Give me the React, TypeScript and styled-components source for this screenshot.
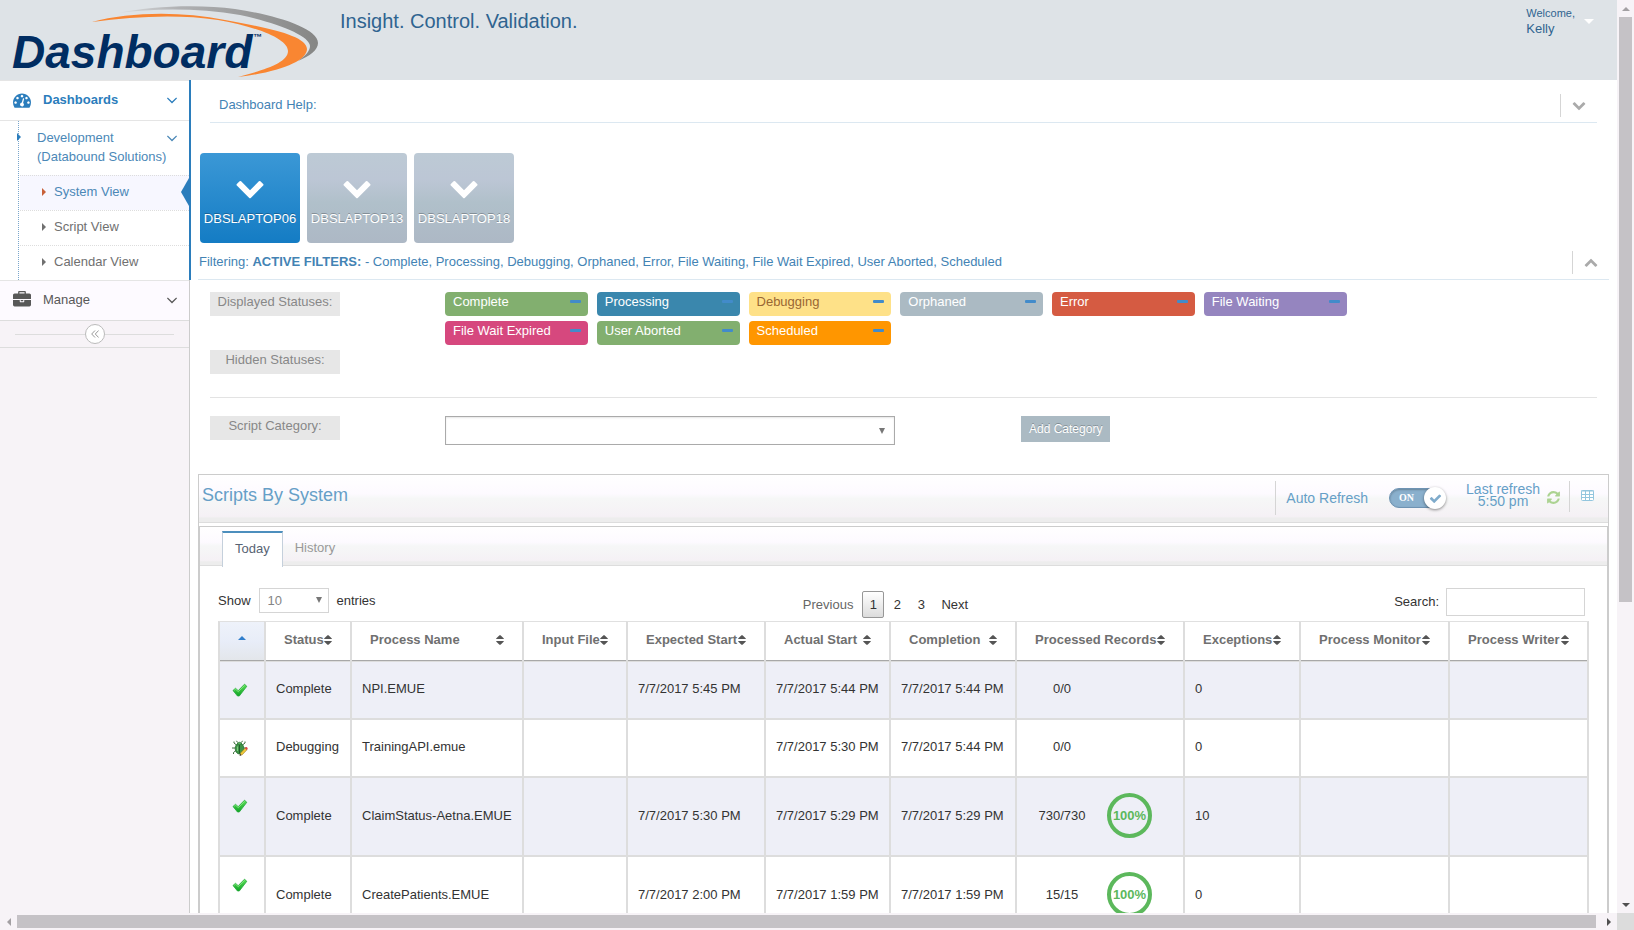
import React from "react";
import styled, { createGlobalStyle, css } from "styled-components";

const GlobalStyle = createGlobalStyle`
  *, *::before, *::after { box-sizing: border-box; }
  body {
    margin: 0;
    background: #fff;
    color: #333;
    font: 13px/20px "Liberation Sans", Arial, sans-serif;
  }
  button, input, select { font: inherit; color: inherit; margin: 0; border-radius: 0; }
  button { background: none; border: 0; padding: 0; cursor: pointer; }
  a { color: inherit; text-decoration: none; }
`;

/* ---------- icons ---------- */

const glyphs = {
  dashboard:
    "M384 1152q0-53-37.5-90.5t-90.5-37.5-90.5 37.5-37.5 90.5 37.5 90.5 90.5 37.5 90.5-37.5 37.5-90.5zm192-448q0-53-37.5-90.5t-90.5-37.5-90.5 37.5-37.5 90.5 37.5 90.5 90.5 37.5 90.5-37.5 37.5-90.5zm428 481l101-382q6-26-7.5-48.5t-38.5-29.5-48 6.5-30 39.5l-101 382q-60 5-107 43.5t-63 98.5q-20 77 20 146t117 89 146-20 89-117q16-60-6-117t-72-91zm660-33q0-53-37.5-90.5t-90.5-37.5-90.5 37.5-37.5 90.5 37.5 90.5 90.5 37.5 90.5-37.5 37.5-90.5zm-640-640q0-53-37.5-90.5t-90.5-37.5-90.5 37.5-37.5 90.5 37.5 90.5 90.5 37.5 90.5-37.5 37.5-90.5zm448 192q0-53-37.5-90.5t-90.5-37.5-90.5 37.5-37.5 90.5 37.5 90.5 90.5 37.5 90.5-37.5 37.5-90.5zm320 448q0 261-141 483-19 29-54 29h-1402q-35 0-54-29-141-221-141-483 0-182 71-348t191-286 286-191 348-71 348 71 286 191 191 286 71 348z",
  briefcase:
    "M640 256h512v-128h-512v128zm1152 640v480q0 66-47 113t-113 47h-1472q-66 0-113-47t-47-113v-480h672v160q0 26 19 45t45 19h320q26 0 45-19t19-45v-160h672zm-768 0v128h-256v-128h256zm768-480v384h-1792v-384q0-66 47-113t113-47h352v-160q0-40 28-68t68-28h576q40 0 68 28t28 68v160h352q66 0 113 47t47 113z",
  chevronDown:
    "M1683 808l-742 741q-19 19-45 19t-45-19l-742-741q-19-19-19-45.5t19-45.5l166-165q19-19 45-19t45 19l531 531 531-531q19-19 45-19t45 19l166 165q19 19 19 45.5t-19 45.5z",
  chevronUp:
    "M1683 1331l-166 165q-19 19-45 19t-45-19l-531-531-531 531q-19 19-45 19t-45-19l-166-165q-19-19-19-45.5t19-45.5l742-741q19-19 45-19t45 19l742 741q19 19 19 45.5t-19 45.5z",
  angleDown:
    "M1395 736q0 13-10 23l-466 466q-10 10-23 10t-23-10l-466-466q-10-10-10-23t10-23l50-50q10-10 23-10t23 10l393 393 393-393q10-10 23-10t23 10l50 50q10 10 10 23z",
  refresh:
    "M1639 1056q0 5-1 7-64 268-268 434.5t-478 166.5q-146 0-282.5-55t-243.5-157l-129 129q-19 19-45 19t-45-19-19-45v-448q0-26 19-45t45-19h448q26 0 45 19t19 45-19 45l-137 137q71 66 161 102t187 36q134 0 250-65t186-179q11-17 53-117 8-23 30-23h192q13 0 22.5 9.5t9.5 22.5zm25-800v448q0 26-19 45t-45 19h-448q-26 0-45-19t-19-45 19-45l138-138q-148-137-349-137-134 0-250 65t-186 179q-11 17-53 117-8 23-30 23h-199q-13 0-22.5-9.5t-9.5-22.5v-7q65-268 270-434.5t480-166.5q146 0 284 55.5t245 156.5l130-129q19-19 45-19t45 19 19 45z",
  check:
    "M1671 566q0 40-28 68l-724 724-136 136q-28 28-68 28t-68-28l-136-136-362-362q-28-28-28-68t28-68l136-136q28-28 68-28t68 28l294 295 656-657q28-28 68-28t68 28l136 136q28 28 28 68z",
};

const Glyph = ({ name, size, color = "currentColor" }: { name: keyof typeof glyphs; size: number; color?: string }) => (
  <svg width={size} height={size} viewBox="0 0 1792 1792" fill={color} aria-hidden="true">
    <path d={glyphs[name]} />
  </svg>
);

const Arrow = ({ dir, color, long = 8, short = 4 }: { dir: "up" | "down" | "left" | "right"; color: string; long?: number; short?: number }) => {
  const vertical = dir === "up" || dir === "down";
  const w = vertical ? long : short;
  const h = vertical ? short : long;
  const points = {
    up: `0,${h} ${w},${h} ${w / 2},0`,
    down: `0,0 ${w},0 ${w / 2},${h}`,
    left: `${w},0 ${w},${h} 0,${h / 2}`,
    right: `0,0 0,${h} ${w},${h / 2}`,
  }[dir];
  return (
    <svg width={w} height={h} viewBox={`0 0 ${w} ${h}`} fill={color} aria-hidden="true">
      <polygon points={points} />
    </svg>
  );
};

const SortIcon = () => (
  <svg width="8" height="10" viewBox="0 0 8 10" fill="#555" aria-hidden="true">
    <path d="M.5 4Q-.2 4 .4 3.300L3.500.3Q4 0 4.500.3L7.600 3.300Q8.200 4 7.500 4ZM.5 6Q-.2 6 .4 6.700L3.500 9.700Q4 10 4.500 9.700L7.600 6.700Q8.200 6 7.500 6Z" />
  </svg>
);

const TableIcon = () => (
  <svg width="13" height="11" viewBox="0 0 13 11" aria-hidden="true">
    <rect x=".5" y=".5" width="12" height="10" rx="1" fill="#fff" stroke="#93c6de" />
    <path d="M0 1h13M0 4.500h13M0 7.500h13M4.500 0v11M8.500 0v11" stroke="#93c6de" fill="none" />
  </svg>
);

const CompleteIcon = () => (
  <svg width="16" height="16" viewBox="0 0 16 16" role="img" aria-label="Complete">
    <defs>
      <linearGradient id="tick" x1="0" y1="0" x2="0" y2="1">
        <stop offset="0" stopColor="#5fe05a" />
        <stop offset="1" stopColor="#0fa325" />
      </linearGradient>
    </defs>
    <path d="M1 8.500L3.500 6.300L6.200 8.700L12.500 2.200L14.800 4.300L7.300 14L5.500 14Z" fill="url(#tick)" stroke="#1fa836" strokeWidth=".8" strokeLinejoin="round" />
    <path d="M2.200 8.300L3.600 7.200L6.300 9.700L12.600 3.300" stroke="#8df088" strokeWidth=".8" fill="none" />
  </svg>
);

const DebugIcon = () => (
  <svg width="16" height="16" viewBox="0 0 16 16" role="img" aria-label="Debugging">
    <path d="M4.500 5L2 3V1.500M3.500 8H0M4 10.500L1.500 12.500V14M10.500 5L13 3V1.500M11.500 8H14M5.500 2.500L4.500.8M9.500 2.500L10.500.8" stroke="#3c6e3c" fill="none" />
    <ellipse cx="7.500" cy="8.500" rx="4.300" ry="5.500" fill="#3f9447" stroke="#246b2e" strokeWidth=".8" />
    <path d="M5 3.800Q7.500 .6 10 3.800Q7.500 5.400 5 3.800Z" fill="#59b35f" stroke="#246b2e" strokeWidth=".6" />
    <path d="M7.500 5V13.500" stroke="#1f5c28" />
    <path d="M5.500 6.500V11" stroke="#7ccb7e" />
    <path d="M8 15.300L8.500 13L13.300 7.900L15.200 9.600L10.300 14.700Z" fill="#efc93a" stroke="#8f6b1d" strokeWidth=".5" />
    <path d="M12.800 8.300L14 7.100Q15 6.900 15.800 8.500L14.700 10Z" fill="#de4444" />
    <path d="M7.500 15.700L8.300 14L9.400 15.200Z" fill="#222" />
  </svg>
);

const Logo = () => (
  <svg width="322" height="80" viewBox="0 0 322 80" role="img" aria-label="Dashboard">
    <defs>
      <linearGradient id="swoosh" x1="118" y1="0" x2="318" y2="0" gradientUnits="userSpaceOnUse">
        <stop offset="0" stopColor="#dcdee0" />
        <stop offset=".3" stopColor="#b0b1b3" />
        <stop offset="1" stopColor="#858685" />
      </linearGradient>
    </defs>
    <path d="M118 13C150 6 200 4 235 9C275 15 318 28 318 43C318 50 310 56 298 61C306 55 310 51 310 46C310 36 278 23 240 15C200 8 155 8 118 13Z" fill="url(#swoosh)" />
    <path d="M92 22C130 12 180 11 225 20C270 28 307 36 307 49C307 61 280 72 238 77C264 70 288 63 288 51C288 40 262 28 218 20C180 14 135 16 92 22Z" fill="#f98632" />
    <text x="12" y="68" fontFamily="'Liberation Sans', Arial, sans-serif" fontSize="46" fontWeight="bold" fontStyle="italic" fill="#002d62">
      Dashboard
    </text>
    <text x="253" y="40" fontFamily="'Liberation Sans', Arial, sans-serif" fontSize="9" fontWeight="bold" fill="#002d62">
      ™
    </text>
  </svg>
);

/* ---------- window frame ---------- */

const Window = styled.div`
  display: grid;
  grid-template: minmax(0, 1fr) 17px / minmax(0, 1fr) 17px;
  height: 100vh;
`;

const Page = styled.div`
  display: flex;
  flex-direction: column;
  overflow: hidden;
`;

const ScrollTrack = styled.div<{ $vertical?: boolean }>`
  display: flex;
  flex-direction: ${(p) => (p.$vertical ? "column" : "row")};
  padding: ${(p) => (p.$vertical ? "0 2px" : "2px 0")};
  background: #f7f3f7;
`;

const ScrollEnd = styled.span`
  display: flex;
  flex: 0 0 17px;
  align-items: center;
  justify-content: center;
`;

const ScrollThumb = styled.span<{ $grow: number }>`
  flex: ${(p) => p.$grow} 0 0;
  background: #c5c2c6;
`;

const ScrollRest = styled.span<{ $grow: number }>`
  flex: ${(p) => p.$grow} 0 0;
`;

const ScrollCorner = styled.div`
  background: #dcdcdc;
`;

/* ---------- header ---------- */

const Header = styled.header`
  display: flex;
  flex: none;
  height: 80px;
  background: #dee3e7;
  color: #2f6490;
`;

const Tagline = styled.h1`
  margin: 0 0 0 18px;
  padding-top: 9px;
  font-size: 20px;
  line-height: 24px;
  font-weight: normal;
`;

const UserMenu = styled.button`
  display: flex;
  gap: 9px;
  margin: 6px 23px 0 auto;
  align-self: flex-start;
  text-align: left;
  line-height: 15px;
  small { display: block; font-size: 11px; }
  svg { margin-top: 13px; }
`;

/* ---------- sidebar ---------- */

const Body = styled.div`
  display: flex;
  flex: 1;
  min-height: 0;
`;

const Sidebar = styled.nav`
  flex: 0 0 190px;
  border-right: 1px solid #ccc;
  background: #f7f3f7;
`;

const OpenGroup = styled.div`
  position: relative;
  background: #fff;
  color: #4b88b7;
  &::after {
    content: "";
    position: absolute;
    top: 0;
    bottom: 0;
    right: -2px;
    width: 2px;
    background: #2b7dbc;
  }
`;

const NavItem = styled.a<{ $open?: boolean }>`
  display: flex;
  align-items: center;
  height: 40px;
  padding: 0 8px 2px 13px;
  border-top: 1px solid #e5e5e5;
  background: ${(p) => (p.$open ? "#fff" : "#fdfaff")};
  color: ${(p) => (p.$open ? "#2b7dbc" : "#585858")};
  font-weight: ${(p) => (p.$open ? "bold" : "normal")};
  span { flex: 1; padding-left: 12px; }
`;

const Submenu = styled.div`
  position: relative;
  border-top: 1px solid #e5e5e5;
  &::before {
    content: "";
    position: absolute;
    top: 0;
    bottom: 0;
    left: 18px;
    border-left: 1px dotted #7aa6cc;
  }
`;

const SubHeading = styled.a`
  position: relative;
  display: flex;
  align-items: flex-start;
  padding: 7px 8px 9px 17px;
  line-height: 19px;
  > svg:first-child { margin-top: 5px; }
  span { flex: 1; padding-left: 16px; white-space: nowrap; }
  b { font-weight: normal; display: block; }
`;

const SubAngle = styled.i`
  position: absolute;
  top: 8px;
  right: 8px;
  display: flex;
`;

const SubItem = styled.a<{ $active?: boolean }>`
  position: relative;
  display: flex;
  align-items: center;
  gap: 8px;
  height: 35px;
  margin-left: 20px;
  padding: 0 0 2px 22px;
  border-top: 1px dotted #ddd;
  background: ${(p) => (p.$active ? "#f7f7ff" : "#fff")};
  color: ${(p) => (p.$active ? "#4b88b7" : "#707070")};
  ${(p) =>
    p.$active &&
    css`
      &::after {
        content: "";
        position: absolute;
        right: 0;
        top: 2px;
        border: 14px solid transparent;
        border-left-width: 0;
        border-right: 8px solid #2b7dbc;
      }
    `}
`;

const Collapse = styled.div`
  display: flex;
  align-items: center;
  height: 28px;
  padding: 0 15px;
  border-top: 1px solid #ddd;
  border-bottom: 1px solid #ddd;
  &::before, &::after { content: ""; flex: 1; border-top: 1px solid #ddd; }
`;

const CollapseButton = styled.button`
  display: flex;
  align-items: center;
  justify-content: center;
  width: 20px;
  height: 20px;
  border: 1px solid #bbb;
  border-radius: 50%;
  background: #fff;
`;

/* ---------- main area ---------- */

const Main = styled.main`
  flex: 1;
  min-width: 0;
  padding: 0 8px;
`;

const FoldBar = styled.div<{ $inset?: boolean }>`
  display: flex;
  align-items: center;
  height: ${(p) => (p.$inset ? 43 : 37)}px;
  margin: ${(p) => (p.$inset ? "0 12px" : "0")};
  padding: ${(p) => (p.$inset ? "8px 0 0 9px" : "2px 0 0 1px")};
  border-bottom: 1px solid #dce8f1;
  color: #4383b4;
`;

const FoldButton = styled.button`
  display: flex;
  align-items: center;
  justify-content: center;
  width: 37px;
  height: 23px;
  margin-left: auto;
  border-left: 1px solid #d5d5d5;
`;

const Tiles = styled.div`
  display: flex;
  gap: 7px;
  margin-top: 30px;
  padding-left: 2px;
`;

const Tile = styled.button<{ $active?: boolean }>`
  display: flex;
  flex-direction: column;
  align-items: center;
  width: 100px;
  height: 90px;
  padding-top: 19px;
  gap: 7px;
  border-radius: 4px;
  background: ${(p) =>
    p.$active ? "linear-gradient(#3b98d6, #147cc4)" : "linear-gradient(#bdcad5, #bcc6d5 30%, #b0c0ca 55%, #adb8c5)"};
  color: #fff;
  text-shadow: 0 -1px 0 rgba(0, 0, 0, 0.25);
`;

const Filters = styled.section`
  padding: 12px 12px 0;
`;

const FilterRow = styled.div`
  display: grid;
  grid-template-columns: 235px minmax(0, 65%);
  align-items: start;
  margin-bottom: 5px;
`;

const FilterLabel = styled.span`
  width: 130px;
  height: 24px;
  background: #e7e7e7;
  color: #888;
  text-align: center;
`;

const Statuses = styled.div`
  display: grid;
  grid-template-columns: repeat(6, 1fr);
  gap: 5px 9px;
`;

const Status = styled.div<{ $bg: string; $fg?: string }>`
  display: flex;
  justify-content: space-between;
  height: 24px;
  padding: 0 7px 0 8px;
  border-radius: 4px;
  background: ${(p) => p.$bg};
  color: ${(p) => p.$fg ?? "#fff"};
`;

const HideStatus = styled.button`
  width: 11px;
  height: 3px;
  margin-top: 8px;
  border-radius: 1px;
  background: #428bca;
`;

const Rule = styled.hr`
  margin: 23px 0 18px;
  border: 0;
  border-top: 1px solid #e3e3e3;
`;

const CategoryRow = styled.div`
  display: grid;
  grid-template-columns: 235px 450px auto;
  align-items: start;
  justify-content: start;
`;

const SelectBox = styled.span<{ $width?: number; $dark?: boolean }>`
  position: relative;
  display: flex;
  width: ${(p) => (p.$width ? `${p.$width}px` : "100%")};
  select {
    width: 100%;
    height: ${(p) => (p.$dark ? 29 : 25)}px;
    padding: 0 8px;
    border: 1px solid ${(p) => (p.$dark ? "#aaa" : "#d5d5d5")};
    background: #fff;
    color: #858585;
    appearance: none;
    box-shadow: ${(p) => (p.$dark ? "inset 0 1px 2px rgba(0, 0, 0, 0.1)" : "none")};
  }
  svg {
    position: absolute;
    right: ${(p) => (p.$dark ? 10 : 7)}px;
    top: ${(p) => (p.$dark ? 12 : 9)}px;
    pointer-events: none;
  }
`;

const AddButton = styled.button`
  height: 26px;
  margin-left: 126px;
  padding: 0 8px;
  background: #abbac3;
  color: #fff;
  font-size: 12px;
  text-shadow: 0 -1px 0 rgba(0, 0, 0, 0.25);
`;

const barGradient = "linear-gradient(#fff, #fdfaff 40%, #f6f7f7 50%, #f5f1f5 88%, #ededed 92%)";

const Panel = styled.section`
  margin-top: 29px;
  border: 1px solid #ccc;
`;

const PanelHeader = styled.div`
  display: flex;
  height: 48px;
  margin-bottom: 3px;
  padding-left: 3px;
  border-bottom: 1px solid #ddd;
  background: ${barGradient};
  color: #669fc7;
  font-size: 14px;
`;

const PanelTitle = styled.h2`
  flex: 1;
  margin: 0;
  font-size: 18px;
  line-height: 41px;
  font-weight: normal;
`;

const RefreshSwitch = styled.label`
  display: flex;
  align-items: center;
  gap: 21px;
  height: 34px;
  margin-top: 6px;
  padding-left: 10px;
  border-left: 1px solid #d5d5d5;
`;

const Switch = styled.span`
  position: relative;
  display: block;
  width: 57px;
  height: 20px;
  input {
    appearance: none;
    display: block;
    width: 52px;
    height: 20px;
    border: 1px solid #6e93b3;
    border-radius: 10px;
    background: #8ab0cd;
    box-shadow: inset 0 1px 2px rgba(0, 0, 0, 0.25);
  }
`;

const SwitchText = styled.span`
  position: absolute;
  left: 10px;
  top: 0;
  color: #fff;
  font: bold 10px/19px "Liberation Serif", "Times New Roman", serif;
`;

const Knob = styled.span`
  position: absolute;
  top: -1px;
  right: 0;
  display: flex;
  align-items: center;
  justify-content: center;
  width: 22px;
  height: 22px;
  border-radius: 50%;
  background: #fff;
  box-shadow: 0 1px 3px rgba(0, 0, 0, 0.45);
`;

const LastRefresh = styled.p`
  margin: 8px 0 0 20px;
  line-height: 12px;
  text-align: center;
`;

const PanelTool = styled.button<{ $divided?: boolean }>`
  display: flex;
  align-items: center;
  justify-content: center;
  height: 31px;
  margin: ${(p) => (p.$divided ? "6px 0 0 8px" : "7px 0 0 6px")};
  padding: ${(p) => (p.$divided ? "0 14px 3px 11px" : "0")};
  border-left: ${(p) => (p.$divided ? "1px solid #d5d5d5" : "0")};
`;

const PanelBody = styled.div`
  border: 1px solid #ccc;
  border-bottom: 0;
`;

const Tabs = styled.div`
  display: flex;
  height: 39px;
  padding: 4px 22px 0;
  border-bottom: 1px solid #ddd;
  background: ${barGradient};
`;

const Tab = styled.button<{ $active?: boolean }>`
  height: 36px;
  padding: 0 12px 2px;
  ${(p) =>
    p.$active
      ? css`
          border: 1px solid #c5d0dc;
          border-top: 2px solid #4c8fbd;
          border-bottom: 0;
          background: #fff;
          color: #576373;
        `
      : css`
          color: #999;
        `}
`;

const TableArea = styled.div`
  padding: 0 18px;
`;

const Controls = styled.div`
  display: grid;
  grid-template-columns: 42% auto 1fr;
  align-items: start;
  height: 55px;
  padding-top: 22px;
`;

const Length = styled.label`
  display: flex;
  align-items: center;
  gap: 8px;
`;

const Pager = styled.div`
  display: flex;
  gap: 2px;
  padding: 3px 0 0 2px;
`;

const PageButton = styled.button<{ $current?: boolean; $muted?: boolean }>`
  min-width: 22px;
  height: 27px;
  padding: 0 7px;
  ${(p) => p.$muted && "color: #666;"}
  ${(p) =>
    p.$current &&
    css`
      padding: 0;
      border: 1px solid #979797;
      border-radius: 2px;
      background: linear-gradient(#fff, #dcdcdc);
    `}
`;

const Search = styled.label`
  display: flex;
  align-items: center;
  justify-content: flex-end;
  gap: 7px;
  padding-right: 4px;
  input {
    width: 139px;
    height: 28px;
    padding: 0 6px;
    border: 1px solid #d5d5d5;
    background: #fff;
  }
`;

const DataTable = styled.table`
  width: 100%;
  table-layout: fixed;
  border-spacing: 0;
  white-space: nowrap;
  th, td {
    padding: 0 10px 2px;
    border-left: 2px solid #ddd;
    text-align: left;
  }
  th:last-child, td:last-child { border-right: 2px solid #ddd; }
  th {
    height: 41px;
    padding: 0 18px 3px;
    border-top: 1px solid #e0e0e0;
    border-bottom: 1px solid #ddd;
    box-shadow: inset 0 -1px #a8a8a8;
    color: #707070;
  }
  td { border-bottom: 2px solid #ddd; }
  tbody tr:nth-child(odd) { background: #eeeff7; }
`;

const SortedHead = styled.th`
  background: linear-gradient(#eef2fa, #e8edf8 50%, #e3e6ea);
  text-align: center;
`;

const SortButton = styled.button`
  display: flex;
  align-items: center;
  justify-content: space-between;
  width: 100%;
  font-weight: bold;
`;

const SortedButton = styled.button`
  display: flex;
  margin: -5px 0 0 -2px;
  padding: 2px;
`;

const Row = styled.tr<{ $tall?: boolean }>`
  height: ${(p) => (p.$tall ? 79 : 58)}px;
`;

const IconCell = styled.td`
  && { padding: 20px 12px 0; vertical-align: top; }
  svg { display: block; }
`;

const Records = styled.div`
  display: flex;
  align-items: center;
  margin: 0 -10px;
  > span { width: 90px; text-align: center; }
`;

const Ring = styled.b`
  width: 45px;
  height: 45px;
  border: 4px solid #5cb85c;
  border-radius: 50%;
  display: flex;
  align-items: center;
  justify-content: center;
  color: #5cb85c;
`;

/* ---------- data ---------- */

const statuses = [
  { label: "Complete", bg: "#82af6f" },
  { label: "Processing", bg: "#3a87ad" },
  { label: "Debugging", bg: "#fee188", fg: "#996633" },
  { label: "Orphaned", bg: "#abbac3" },
  { label: "Error", bg: "#d55b42" },
  { label: "File Waiting", bg: "#9585bf" },
  { label: "File Wait Expired", bg: "#d6487e" },
  { label: "User Aborted", bg: "#82af6f" },
  { label: "Scheduled", bg: "#ff9600" },
];

const columns = [
  { title: "Status", width: 86 },
  { title: "Process Name", width: 172 },
  { title: "Input File", width: 104 },
  { title: "Expected Start", width: 138 },
  { title: "Actual Start", width: 125 },
  { title: "Completion", width: 126 },
  { title: "Processed Records", width: 168 },
  { title: "Exceptions", width: 116 },
  { title: "Process Monitor", width: 149 },
  { title: "Process Writer", width: 141 },
];

const rows = [
  { status: "Complete", name: "NPI.EMUE", expected: "7/7/2017 5:45 PM", actual: "7/7/2017 5:44 PM", done: "7/7/2017 5:44 PM", records: "0/0", exceptions: "0" },
  { status: "Debugging", name: "TrainingAPI.emue", expected: "", actual: "7/7/2017 5:30 PM", done: "7/7/2017 5:44 PM", records: "0/0", exceptions: "0" },
  { status: "Complete", name: "ClaimStatus-Aetna.EMUE", expected: "7/7/2017 5:30 PM", actual: "7/7/2017 5:29 PM", done: "7/7/2017 5:29 PM", records: "730/730", percent: "100%", exceptions: "10" },
  { status: "Complete", name: "CreatePatients.EMUE", expected: "7/7/2017 2:00 PM", actual: "7/7/2017 1:59 PM", done: "7/7/2017 1:59 PM", records: "15/15", percent: "100%", exceptions: "0" },
];

export default function App() {
  return (
    <Window>
      <GlobalStyle />
      <Page>
        <Header>
          <Logo />
          <Tagline>Insight. Control. Validation.</Tagline>
          <UserMenu>
            <span>
              <small>Welcome,</small>
              Kelly
            </span>
            <Arrow dir="down" color="#fff" long={10} short={5} />
          </UserMenu>
        </Header>
        <Body>
          <Sidebar>
            <OpenGroup>
              <NavItem href="#dashboards" $open>
                <Glyph name="dashboard" size={18} />
                <span>Dashboards</span>
                <Glyph name="angleDown" size={18} />
              </NavItem>
              <Submenu>
                <SubHeading href="#development">
                  <Arrow dir="right" color="#2b7dbc" />
                  <span>
                    <b>Development</b>
                    <b>(Databound Solutions)</b>
                  </span>
                  <SubAngle>
                    <Glyph name="angleDown" size={18} />
                  </SubAngle>
                </SubHeading>
                <SubItem href="#system" $active>
                  <Arrow dir="right" color="#c86139" />
                  System View
                </SubItem>
                <SubItem href="#script">
                  <Arrow dir="right" color="#707070" />
                  Script View
                </SubItem>
                <SubItem href="#calendar">
                  <Arrow dir="right" color="#707070" />
                  Calendar View
                </SubItem>
              </Submenu>
            </OpenGroup>
            <NavItem href="#manage">
              <Glyph name="briefcase" size={18} />
              <span>Manage</span>
              <Glyph name="angleDown" size={18} />
            </NavItem>
            <Collapse>
              <CollapseButton aria-label="Collapse menu">
                <svg width="8" height="8" viewBox="0 0 8 8" fill="none" stroke="#999" aria-hidden="true">
                  <path d="M4 .5L.7 4L4 7.500M7.600 .5L4.300 4L7.600 7.500" />
                </svg>
              </CollapseButton>
            </Collapse>
          </Sidebar>

          <Main>
            <FoldBar $inset>
              Dashboard Help:
              <FoldButton aria-label="Show help">
                <Glyph name="chevronDown" size={14} color="#aaa" />
              </FoldButton>
            </FoldBar>

            <Tiles>
              {["DBSLAPTOP06", "DBSLAPTOP13", "DBSLAPTOP18"].map((host, i) => (
                <Tile key={host} $active={i === 0}>
                  <Glyph name="chevronDown" size={30} />
                  {host}
                </Tile>
              ))}
            </Tiles>

            <FoldBar>
              <span>
                Filtering: <b>ACTIVE FILTERS:</b> - Complete, Processing, Debugging, Orphaned, Error, File Waiting, File Wait Expired, User
                Aborted, Scheduled
              </span>
              <FoldButton aria-label="Hide filters">
                <Glyph name="chevronUp" size={14} color="#aaa" />
              </FoldButton>
            </FoldBar>

            <Filters>
              <FilterRow>
                <FilterLabel>Displayed Statuses:</FilterLabel>
                <Statuses>
                  {statuses.map((s) => (
                    <Status key={s.label} $bg={s.bg} $fg={s.fg}>
                      {s.label}
                      <HideStatus aria-label={`Hide ${s.label}`} />
                    </Status>
                  ))}
                </Statuses>
              </FilterRow>
              <FilterRow>
                <FilterLabel>Hidden Statuses:</FilterLabel>
              </FilterRow>
              <Rule />
              <CategoryRow>
                <FilterLabel as="label" htmlFor="category">
                  Script Category:
                </FilterLabel>
                <SelectBox $dark>
                  <select id="category">
                    <option />
                  </select>
                  <Arrow dir="down" color="#777" long={6} short={6} />
                </SelectBox>
                <AddButton>Add Category</AddButton>
              </CategoryRow>
            </Filters>

            <Panel>
              <PanelHeader>
                <PanelTitle>Scripts By System</PanelTitle>
                <RefreshSwitch>
                  Auto Refresh
                  <Switch>
                    <input type="checkbox" defaultChecked />
                    <SwitchText>ON</SwitchText>
                    <Knob>
                      <Glyph name="check" size={13} color="#7fabcb" />
                    </Knob>
                  </Switch>
                </RefreshSwitch>
                <LastRefresh>
                  Last refresh
                  <br />
                  5:50 pm
                </LastRefresh>
                <PanelTool aria-label="Refresh">
                  <Glyph name="refresh" size={15} color="#acd392" />
                </PanelTool>
                <PanelTool aria-label="Columns" $divided>
                  <TableIcon />
                </PanelTool>
              </PanelHeader>
              <PanelBody>
                <Tabs role="tablist">
                  <Tab role="tab" aria-selected $active>
                    Today
                  </Tab>
                  <Tab role="tab">History</Tab>
                </Tabs>
                <TableArea>
                  <Controls>
                    <Length>
                      Show
                      <SelectBox $width={70}>
                        <select defaultValue="10">
                          <option>10</option>
                          <option>25</option>
                        </select>
                        <Arrow dir="down" color="#777" long={6} short={6} />
                      </SelectBox>
                      entries
                    </Length>
                    <Pager>
                      <PageButton $muted>Previous</PageButton>
                      <PageButton $current>1</PageButton>
                      <PageButton>2</PageButton>
                      <PageButton>3</PageButton>
                      <PageButton>Next</PageButton>
                    </Pager>
                    <Search>
                      Search:
                      <input type="search" />
                    </Search>
                  </Controls>
                  <DataTable>
                    <colgroup>
                      <col width={46} />
                      {columns.map((c) => (
                        <col key={c.title} width={c.width} />
                      ))}
                    </colgroup>
                    <thead>
                      <tr>
                        <SortedHead aria-sort="ascending">
                          <SortedButton aria-label="Sort by icon">
                            <Arrow dir="up" color="#307ecc" />
                          </SortedButton>
                        </SortedHead>
                        {columns.map((c) => (
                          <th key={c.title}>
                            <SortButton>
                              {c.title}
                              <SortIcon />
                            </SortButton>
                          </th>
                        ))}
                      </tr>
                    </thead>
                    <tbody>
                      {rows.map((r) => (
                        <Row key={r.name} $tall={!!r.percent}>
                          <IconCell>{r.status === "Debugging" ? <DebugIcon /> : <CompleteIcon />}</IconCell>
                          <td>{r.status}</td>
                          <td>{r.name}</td>
                          <td />
                          <td>{r.expected}</td>
                          <td>{r.actual}</td>
                          <td>{r.done}</td>
                          <td>
                            <Records>
                              <span>{r.records}</span>
                              {r.percent && <Ring>{r.percent}</Ring>}
                            </Records>
                          </td>
                          <td>{r.exceptions}</td>
                          <td />
                          <td />
                        </Row>
                      ))}
                    </tbody>
                  </DataTable>
                </TableArea>
              </PanelBody>
            </Panel>
          </Main>
        </Body>
      </Page>
      <ScrollTrack $vertical>
        <ScrollEnd>
          <Arrow dir="up" color="#a3a0a3" />
        </ScrollEnd>
        <ScrollThumb $grow={585} />
        <ScrollRest $grow={294} />
        <ScrollEnd>
          <Arrow dir="down" color="#505050" />
        </ScrollEnd>
      </ScrollTrack>
      <ScrollTrack>
        <ScrollEnd>
          <Arrow dir="left" color="#a3a0a3" />
        </ScrollEnd>
        <ScrollThumb $grow={1580} />
        <ScrollRest $grow={4} />
        <ScrollEnd>
          <Arrow dir="right" color="#505050" />
        </ScrollEnd>
      </ScrollTrack>
      <ScrollCorner />
    </Window>
  );
}
